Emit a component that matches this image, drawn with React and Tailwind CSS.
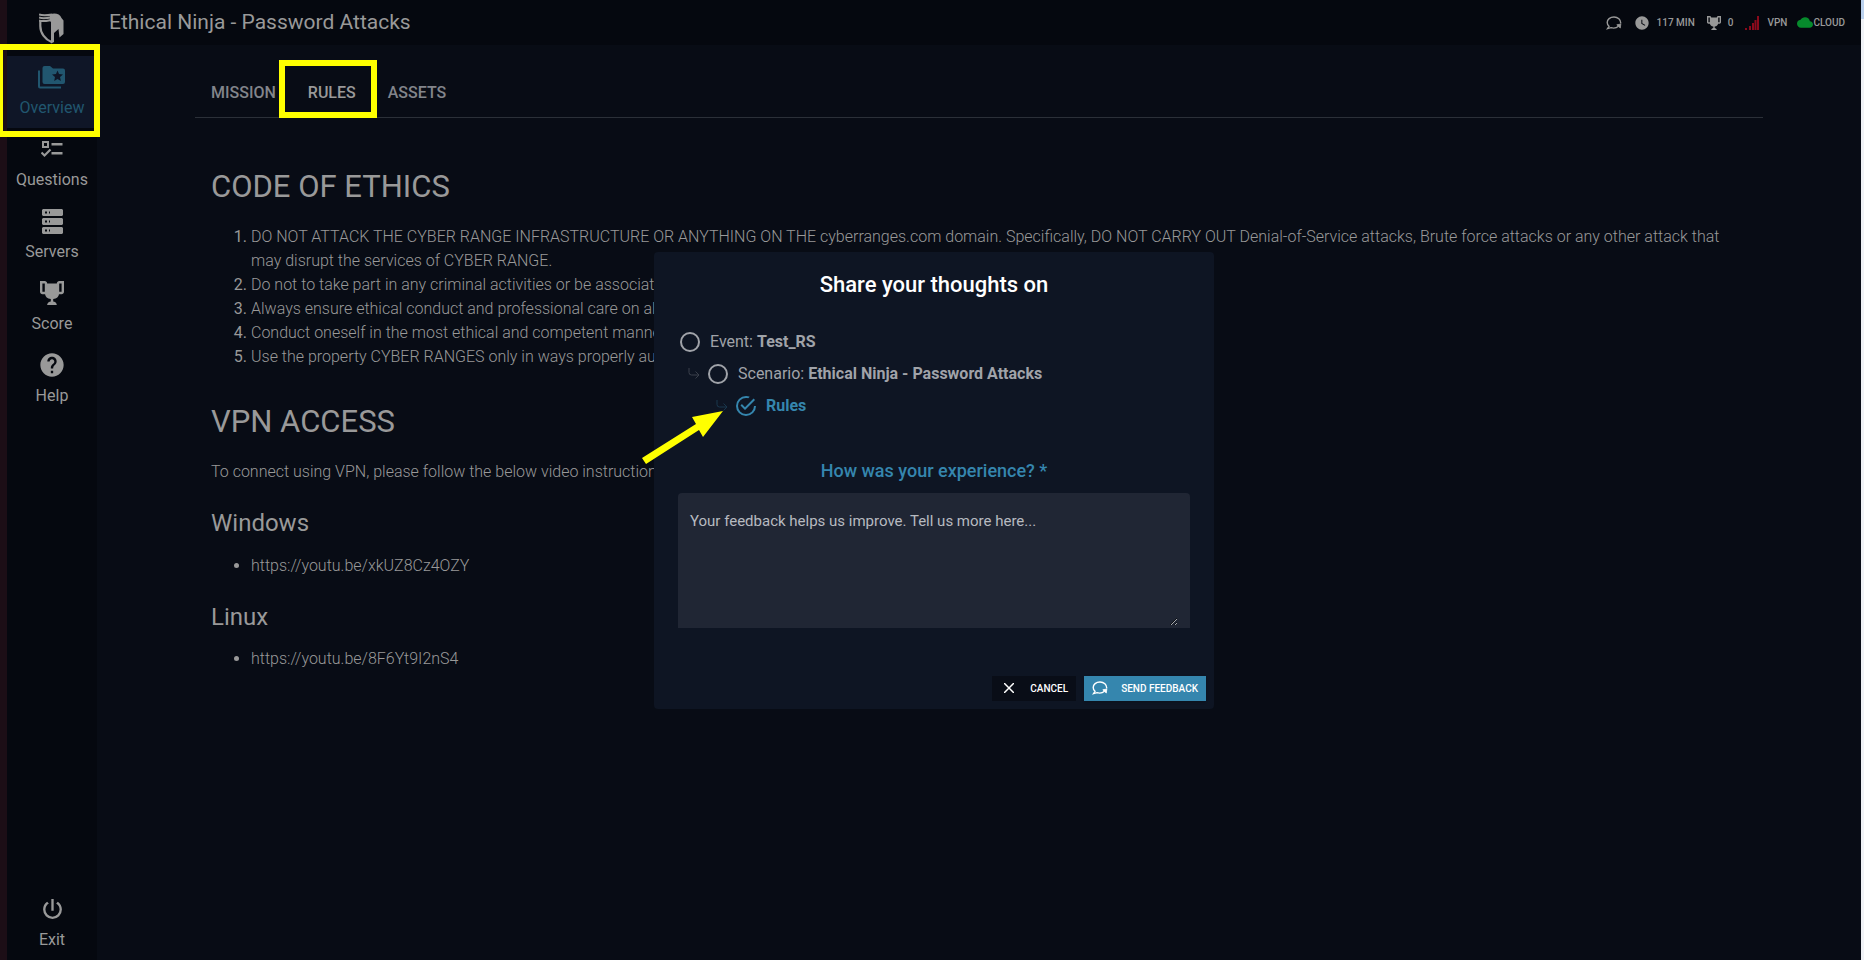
import React, { useState } from 'react';
import { MdHelp, MdWatchLater } from 'react-icons/md';

const LogoIcon = () => (
  <svg viewBox="0 0 26 32" className="h-8 w-[26px]" fill="none" stroke="currentColor" aria-hidden="true">
    <path strokeWidth="2" d="M0 1.500C4 3 8 2.500 13 1.500M0 4.500C4 6 8 5.200 13 4.200M0 7.500C4 9 8 7.800 13 6.800" />
    <path strokeWidth="2.2" d="M1.300 8V13C1.300 20 6 26.500 12.500 29" />
    <path
      fill="currentColor"
      stroke="none"
      d="M11 1.500C15 -0.500 21 0.500 22.500 5L24.500 7.500V21L20.500 24.500L19.500 16L15 20V29L12 30.500V9C10.500 8 10.500 4 11 1.500Z"
    />
  </svg>
);

const FolderStarIcon = () => (
  <svg viewBox="0 0 28 24" className="h-6 w-7 fill-current" aria-hidden="true">
    <path d="M0 5.500H2V21.500H23V23.500H2A2 2 0 0 1 0 21.500Z" />
    <path fillRule="evenodd" d="M6.500 1H12L15 3.500H25A2 2 0 0 1 27 5.500V17A2 2 0 0 1 25 19H6.500A2 2 0 0 1 4.500 17V3A2 2 0 0 1 6.500 1ZM19.500 5.500L18 9L14 9.400L17 12L16.200 16L19.500 13.900L22.900 16L22 12L25 9.400L21 9Z" />
  </svg>
);

const ListIcon = () => (
  <svg viewBox="0 0 22 18" className="h-[18px] w-[22px] fill-current" aria-hidden="true">
    <path fillRule="evenodd" d="M1 1H8V8H1ZM3 3V6H6V3ZM10.500 3H21.500V5.500H10.500ZM10.500 12H21.500V14.500H10.500Z" />
    <path d="M0.500 12.500L3.500 15.500L9.500 9.500" fill="none" stroke="currentColor" strokeWidth="2.200" />
  </svg>
);

const ServerIcon = () => (
  <svg viewBox="0 0 21 25" className="h-[25px] w-[21px] fill-current" aria-hidden="true">
    <path fillRule="evenodd" d="M1 0H20L21 1V6L20 7H1L0 6V1ZM3 2.500V4.500H5V2.500ZM7 2.500V4.500H8V2.500ZM1 9H20L21 10V15L20 16H1L0 15V10ZM3 11.500V13.500H5V11.500ZM7 11.500V13.500H8V11.500ZM1 18H20L21 19V24L20 25H1L0 24V19ZM3 20.500V22.500H5V20.500ZM7 20.500V22.500H8V20.500Z" />
  </svg>
);

const TrophyIcon = ({ className }) => (
  <svg viewBox="2 2 20 20" className={className} aria-hidden="true">
    <path fill="currentColor" d="M18 2c-.900 0-2 1-2 2H8c0-1-1.100-2-2-2H2v9c0 1 1 2 2 2h2.200c.400 2 1.700 3.700 4.800 4v2.080C8 19.540 8 22 8 22h8s0-2.460-3-2.920V17c3.100-.300 4.400-2 4.800-4H20c1 0 2-1 2-2V2h-4M6 11H4V4h2v7m14 0h-2V4h2v7Z" />
  </svg>
);

const PowerIcon = () => (
  <svg viewBox="4 3 16 17" className="h-5 w-[19px] fill-current" aria-hidden="true">
    <path d="m16.560 5.440-1.450 1.450A5.969 5.969 0 0 1 18 12a6 6 0 0 1-6 6 6 6 0 0 1-6-6c0-2.170 1.160-4.060 2.880-5.120L7.440 5.440A7.961 7.961 0 0 0 4 12a8 8 0 0 0 8 8 8 8 0 0 0 8-8c0-2.720-1.360-5.120-3.440-6.560M13 3h-2v10h2" />
  </svg>
);

const FeedbackIcon = () => (
  <svg viewBox="0 0 16 14" className="h-[14px] w-4" fill="none" stroke="currentColor" strokeWidth="1.4" aria-hidden="true">
    <path d="M14.700 7.500C15 3.800 11.800 1 8 1C4 1 1.200 3.500 1.200 6.500C1.200 8 1.900 9.300 3 10.300L1.500 12.700L5 11.700C7.500 12.400 10.500 12 12.500 10.200" />
    <path fill="currentColor" strokeWidth="0.8" d="M10.800 8.800L14.800 8L14.300 12Z" />
  </svg>
);

const SignalIcon = () => (
  <svg viewBox="0 0 14 14" className="size-3.5 fill-[#8a0a1c]" aria-hidden="true">
    <path d="M0 12H2V14H0ZM4 10H6V14H4ZM7 7H9V14H7ZM9.500 4H11.500V14H9.500ZM12 0H14V14H12Z" />
  </svg>
);

const CloudIcon = () => (
  <svg viewBox="0 4 24 16" className="h-[11px] w-4 fill-[#068a2c]" aria-hidden="true">
    <path d="M19.350 10.040A7.490 7.490 0 0 0 12 4C9.110 4 6.600 5.640 5.350 8.040A5.994 5.994 0 0 0 0 14c0 3.310 2.690 6 6 6h13c2.760 0 5-2.240 5-5 0-2.640-2.050-4.780-4.650-4.960z" />
  </svg>
);

const CheckCircleIcon = () => (
  <svg viewBox="2 2 20 20" className="size-5 fill-current" aria-hidden="true">
    <path d="M20 12a8 8 0 0 1-8 8 8 8 0 0 1-8-8 8 8 0 0 1 8-8c.760 0 1.500.110 2.200.310l1.570-1.570A9.822 9.822 0 0 0 12 2 10 10 0 0 0 2 12a10 10 0 0 0 10 10 10 10 0 0 0 10-10M7.910 10.080L6.500 11.500 11 16 21 6l-1.410-1.420L11 13.170l-3.090-3.090z" />
  </svg>
);

const BranchIcon = () => (
  <svg viewBox="0 0 12 12" className="size-3 fill-none stroke-current" aria-hidden="true">
    <path d="M1 0V4.500A2.500 2.500 0 0 0 3.500 7H11M7.500 3.500L11 7L7.500 10.500" />
  </svg>
);

const navItems = [
  { label: 'Overview', icon: <FolderStarIcon />, active: true },
  { label: 'Questions', icon: <ListIcon /> },
  { label: 'Servers', icon: <ServerIcon /> },
  { label: 'Score', icon: <TrophyIcon className="size-6" /> },
  { label: 'Help', icon: <MdHelp className="size-7" /> },
];

const tabs = ['MISSION', 'RULES', 'ASSETS'];

const rules = [
  'DO NOT ATTACK THE CYBER RANGE INFRASTRUCTURE OR ANYTHING ON THE cyberranges.com domain. Specifically, DO NOT CARRY OUT Denial-of-Service attacks, Brute force attacks or any other attack that may disrupt the services of CYBER RANGE.',
  'Do not to take part in any criminal activities or be associated',
  'Always ensure ethical conduct and professional care on all',
  'Conduct oneself in the most ethical and competent manner',
  'Use the property CYBER RANGES only in ways properly author',
];

const topics = [
  { id: 'event', kind: 'Event:', name: 'Test_RS' },
  { id: 'scenario', kind: 'Scenario:', name: 'Ethical Ninja - Password Attacks' },
  { id: 'rules', kind: '', name: 'Rules' },
];

const NavItem = ({ label, icon, active }) => (
  <a
    href="#"
    className={
      active
        ? 'flex h-[72px] flex-col items-center bg-[#0f1627] pt-[7px] text-[#21566f]'
        : 'flex h-[72px] flex-col items-center pt-[7px] text-[#999999]'
    }
  >
    <span className="flex h-7 items-center">{icon}</span>
    <span className="mt-[5px] text-base leading-6">{label}</span>
  </a>
);

const Sidebar = () => (
  <nav className="flex w-[90px] shrink-0 flex-col bg-[#05080f]">
    <a href="#" aria-label="Home" className="flex h-14 justify-center pt-[13px] text-[#999999]">
      <LogoIcon />
    </a>
    {navItems.map((item) => (
      <NavItem key={item.label} {...item} />
    ))}
    <div className="mt-auto">
      <NavItem label="Exit" icon={<PowerIcon />} />
    </div>
  </nav>
);

const Header = () => (
  <header className="flex h-[45px] items-center justify-between bg-[#05080f] pr-4 pl-3 text-[#999999]">
    <h1 className="text-[21px]">Ethical Ninja - Password Attacks</h1>
    <div className="flex items-center text-[10px] font-medium">
      <button type="button" aria-label="Feedback" className="mr-3">
        <FeedbackIcon />
      </button>
      <MdWatchLater className="mr-[7px] size-4" />
      <span className="mr-3">117 MIN</span>
      <TrophyIcon className="mr-[7px] size-3.5" />
      <span className="mr-3">0</span>
      <SignalIcon />
      <span className="mr-2.5 ml-2">VPN</span>
      <CloudIcon />
      <span>CLOUD</span>
    </div>
  </header>
);

const Tabs = () => (
  <div className="mr-[98px] ml-[98px] flex h-[73px] items-center gap-8 border-b border-[#2b3038] px-4 pt-6 text-base font-medium">
    {tabs.map((tab) => (
      <button key={tab} type="button" className={tab === 'RULES' ? 'relative text-[#999999]' : 'text-[#82858b]'}>
        {tab}
        {tab === 'RULES' && (
          <span className="absolute -top-[21px] -right-[21px] -bottom-[13px] -left-[29px] border-6 border-[#ffff00]" />
        )}
      </button>
    ))}
  </div>
);

const RulesContent = () => (
  <article className="mr-[98px] ml-[98px] px-4 text-base leading-6 font-light text-[#999999]">
    <h2 className="mt-[49px] text-[31px] leading-10 font-normal">CODE OF ETHICS</h2>
    <ol className="mt-[18px] list-decimal pl-10 marker:font-normal">
      {rules.map((rule) => (
        <li key={rule}>{rule}</li>
      ))}
    </ol>
    <h2 className="mt-[33px] text-[31px] leading-10 font-normal">VPN ACCESS</h2>
    <p className="mt-[18px]">To connect using VPN, please follow the below video instructions</p>
    <h3 className="mt-[23px] text-2xl font-normal">Windows</h3>
    <ul className="mt-[15px] list-disc pl-10">
      <li>
        <a href="https://youtu.be/xkUZ8Cz4OZY">https://youtu.be/xkUZ8Cz4OZY</a>
      </li>
    </ul>
    <h3 className="mt-[23px] text-2xl font-normal">Linux</h3>
    <ul className="mt-3.5 list-disc pl-10">
      <li>
        <a href="https://youtu.be/8F6Yt9I2nS4">https://youtu.be/8F6Yt9I2nS4</a>
      </li>
    </ul>
  </article>
);

const TopicOption = ({ topic, depth, checked, onSelect }) => (
  <label
    className={
      checked
        ? 'relative flex h-8 items-center text-[#3586ae]'
        : 'relative flex h-8 items-center text-[#a0a3a9]'
    }
    style={{ paddingLeft: depth * 28 }}
  >
    {depth > 0 && (
      <span className="-ml-5 mr-2 opacity-30">
        <BranchIcon />
      </span>
    )}
    <input
      type="radio"
      name="topic"
      value={topic.id}
      checked={checked}
      onChange={() => onSelect(topic.id)}
      className={
        checked
          ? 'sr-only'
          : 'size-5 appearance-none rounded-full border-2 border-current'
      }
    />
    {checked && <CheckCircleIcon />}
    <span className="ml-2.5">
      {topic.kind} <strong className="font-bold">{topic.name}</strong>
    </span>
  </label>
);

const FeedbackDialog = () => {
  const [topic, setTopic] = useState('rules');
  const [text, setText] = useState('');

  return (
    <div
      role="dialog"
      aria-labelledby="dialog-title"
      className="relative w-[560px] rounded bg-[#0e1523] px-6 pt-[17px] pb-2 text-base"
    >
      <h2 id="dialog-title" className="text-center text-[22px] leading-8 font-medium text-white">
        Share your thoughts on
      </h2>
      <div className="mt-[25px] pl-0.5">
        {topics.map((item, i) => (
          <TopicOption key={item.id} topic={item} depth={i} checked={topic === item.id} onSelect={setTopic} />
        ))}
      </div>
      <label htmlFor="feedback" className="mt-[37px] block text-center text-lg leading-6 font-medium text-[#3586ae]">
        How was your experience? *
      </label>
      <div className="mt-2.5 h-[135px] rounded-t bg-[#202634] pt-4 pr-3 pb-0.5">
        <textarea
          id="feedback"
          value={text}
          onChange={(e) => setText(e.target.value)}
          placeholder="Your feedback helps us improve. Tell us more here..."
          className="block h-full w-full resize pl-3 text-[15px] leading-6 text-[#b7bac0] outline-none placeholder:text-[#b7bac0]"
        />
      </div>
      <div className="-mr-4 mt-12 flex justify-end gap-2 text-[10px] font-medium text-white">
        <button type="button" className="flex h-[25px] items-center gap-4 bg-[#090d17] pr-2 pl-3">
          <svg viewBox="0 0 10 10" className="size-2.5 stroke-current" aria-hidden="true">
            <path d="M0 0L10 10M10 0L0 10" strokeWidth="1.5" />
          </svg>
          CANCEL
        </button>
        <button type="button" className="flex h-[25px] items-center gap-[13px] bg-[#3586ae] px-2 shadow">
          <FeedbackIcon />
          SEND FEEDBACK
        </button>
      </div>
      {/* Arrow pointing at the selected topic */}
      <svg viewBox="0 0 84 56" className="absolute top-[157px] -left-3 h-14 w-[84px] fill-[#ffff00]" aria-hidden="true">
        <path d="M0 49L54 15L50 8L81 2L61 28L57 21L4 55Z" />
      </svg>
    </div>
  );
};

const App = () => (
  <div className="relative flex min-h-screen bg-[#1c0e16] font-[Roboto,sans-serif]">
    <div className="w-[7px] shrink-0" />
    <Sidebar />
    <main className="min-w-0 flex-1 bg-[#080c15]">
      <Header />
      <Tabs />
      <RulesContent />
    </main>
    <div className="w-[3px] shrink-0 bg-[#f0f2f6]">
      <div className="h-[19px] bg-[#bcd2ee]" />
    </div>
    <div className="absolute inset-0 flex items-center justify-center pl-1">
      <FeedbackDialog />
    </div>
    {/* Highlight round the active menu item */}
    <div className="absolute top-11 -left-[3px] h-[93px] w-[103px] border-6 border-[#ffff00]" />
  </div>
);

export default App;
